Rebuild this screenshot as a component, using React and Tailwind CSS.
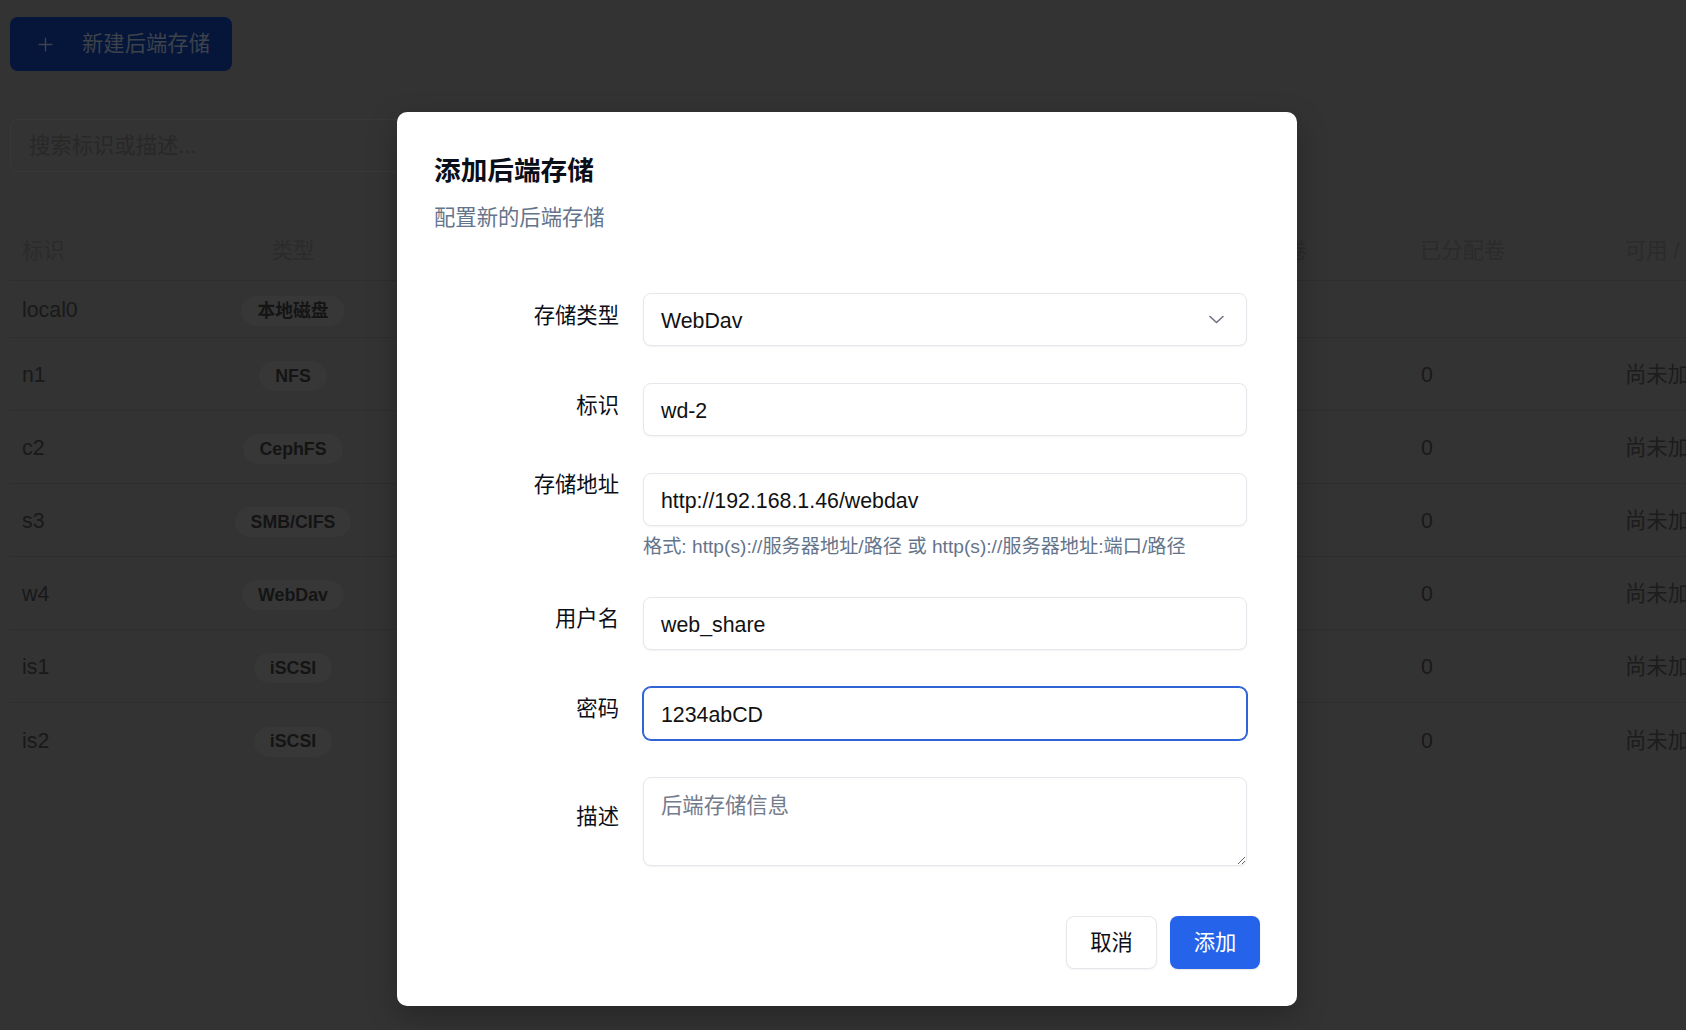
import React from 'react';

const rows = [
  { id: 'local0', type: '本地磁盘', short: true },
  { id: 'n1', type: 'NFS' },
  { id: 'c2', type: 'CephFS' },
  { id: 's3', type: 'SMB/CIFS' },
  { id: 'w4', type: 'WebDav' },
  { id: 'is1', type: 'iSCSI' },
  { id: 'is2', type: 'iSCSI', last: true },
];

function Field({ label, children, alignTop = false }) {
  return (
    <div className={`flex gap-[24px] ${alignTop ? 'items-start' : 'items-center'}`}>
      <label className="w-[185px] shrink-0 -translate-y-[4px] text-right text-[21.33px] leading-[32px] text-[#0b0f19]">
        {label}
      </label>
      <div className="w-[604px]">{children}</div>
    </div>
  );
}

const inputCls =
  'block w-full h-[53px] rounded-[8px] border border-[#e4e7ec] bg-white px-[17px] pt-[4px] text-[21.33px] text-[#111111] shadow-[0_1px_2px_rgba(0,0,0,0.05)] outline-none';

export default function App() {
  return (
    <div className="relative w-[1686px] h-[1030px] overflow-hidden bg-[#333333] [font-family:'Liberation_Sans','Noto_Sans_CJK_SC',sans-serif]">
      {/* dimmed page behind the dialog */}
      <div className="px-[10px] pt-[17px]">
        <button className="flex items-center h-[54px] w-[222px] rounded-[8px] bg-[#05163a] pl-[27px] text-[21.33px] text-[#3d424b]">
          <svg width="17" height="17" viewBox="0 0 24 24" fill="none" stroke="currentColor" strokeWidth="2" strokeLinecap="round">
            <path d="M12 3v18M3 12h18" />
          </svg>
          <span className="ml-[28px] pt-[2px]">新建后端存储</span>
        </button>

        <div className="mt-[48px] h-[53px] w-[560px] rounded-[8px] border border-[#393939] flex items-center pl-[18px] pt-[2px] text-[21.33px] text-[#282828]">
          搜索标识或描述...
        </div>

        <div className="mt-[52px] w-[1800px] text-[21.33px]">
          <div className="flex items-center h-[57px] border-b border-[#2e2e2e] text-[#2b2b2b]">
            <div className="w-[190px] pl-[12px]">标识</div>
            <div className="w-[186px] text-center">类型</div>
            <div className="w-[845px]" />
            <div className="w-[177px] pl-[12px] whitespace-nowrap overflow-hidden">挂载卷</div>
            <div className="w-[205px] pl-[12px]">已分配卷</div>
            <div className="flex-1 pl-[12px]">可用 / 总容量</div>
          </div>
          {rows.map((r) => (
            <div
              key={r.id}
              className={`flex items-center pt-[4px] ${r.short ? 'h-[57px]' : 'h-[73px]'} ${r.last ? '' : 'border-b border-[#2e2e2e]'} text-[#191919]`}
            >
              <div className="w-[190px] pl-[12px]">{r.id}</div>
              <div className="w-[186px] flex justify-center">
                <span className="h-[30px] px-[16px] flex items-center rounded-full bg-[#373737] text-[17.8px] font-bold text-[#141414]">
                  {r.type}
                </span>
              </div>
              <div className="w-[845px]" />
              <div className="w-[177px]" />
              <div className="w-[205px] pl-[13px]">{r.short ? '' : '0'}</div>
              <div className="flex-1 pl-[12px] text-[#1c1c1c]">{r.short ? '' : '尚未加载'}</div>
            </div>
          ))}
        </div>
      </div>

      {/* dialog */}
      <div className="absolute left-[397px] top-[112px] w-[900px] rounded-[10px] bg-white p-[37px] shadow-[0_10px_30px_rgba(0,0,0,0.25)]">
        <h2 className="mt-[2px] text-[26.67px] font-bold leading-[40px] text-[#0b0f19]">添加后端存储</h2>
        <p className="mt-[11px] text-[21.33px] leading-[32px] text-[#64748b]">配置新的后端存储</p>

        <div className="mt-[59px] flex flex-col gap-[37px]">
          <Field label="存储类型">
            <div className={`${inputCls} flex items-center justify-between`}>
              <span>WebDav</span>
              <svg width="15" height="9" viewBox="0 0 15 9" fill="none" stroke="#6b7280" strokeWidth="1.6" strokeLinecap="round" strokeLinejoin="round" className="mr-[5px] -mt-[4px]">
                <path d="M1 1.5l6.5 6 6.5-6" />
              </svg>
            </div>
          </Field>

          <Field label="标识">
            <input className={inputCls} defaultValue="wd-2" />
          </Field>

          <Field label="存储地址" alignTop>
            <input className={inputCls} defaultValue="http://192.168.1.46/webdav" />
            <p className="mt-[9px] text-[19.2px] leading-[24.67px] text-[#64748b]">
              格式: http(s)://服务器地址/路径 或 http(s)://服务器地址:端口/路径
            </p>
          </Field>

          <Field label="用户名">
            <input className={inputCls} defaultValue="web_share" />
          </Field>

          <Field label="密码">
            <input
              className="block w-full h-[53px] rounded-[8px] border border-[#2f63d6] bg-white px-[17px] pt-[4px] text-[21.33px] text-[#111111] shadow-[0_0_0_1px_#2f63d6] outline-none"
              defaultValue="1234abCD"
            />
          </Field>

          <Field label="描述">
            <textarea
              className="block w-full h-[89px] rounded-[8px] border border-[#e4e7ec] bg-white px-[17px] py-[12px] text-[21.33px] leading-[32px] text-[#111111] placeholder:text-[#737b8c] shadow-[0_1px_2px_rgba(0,0,0,0.05)] outline-none"
              placeholder="后端存储信息"
            />
          </Field>
        </div>

        <div className="mt-[50px] flex justify-end gap-[13px]">
          <button className="h-[53px] w-[91px] rounded-[8px] border border-[#e4e7ec] bg-white pt-[3px] text-[21.33px] text-[#0b0f19] shadow-[0_1px_2px_rgba(0,0,0,0.05)]">
            取消
          </button>
          <button className="h-[53px] w-[90px] rounded-[8px] bg-[#2563eb] pt-[3px] text-[21.33px] text-white shadow-[0_1px_2px_rgba(0,0,0,0.1)]">
            添加
          </button>
        </div>
      </div>
    </div>
  );
}
